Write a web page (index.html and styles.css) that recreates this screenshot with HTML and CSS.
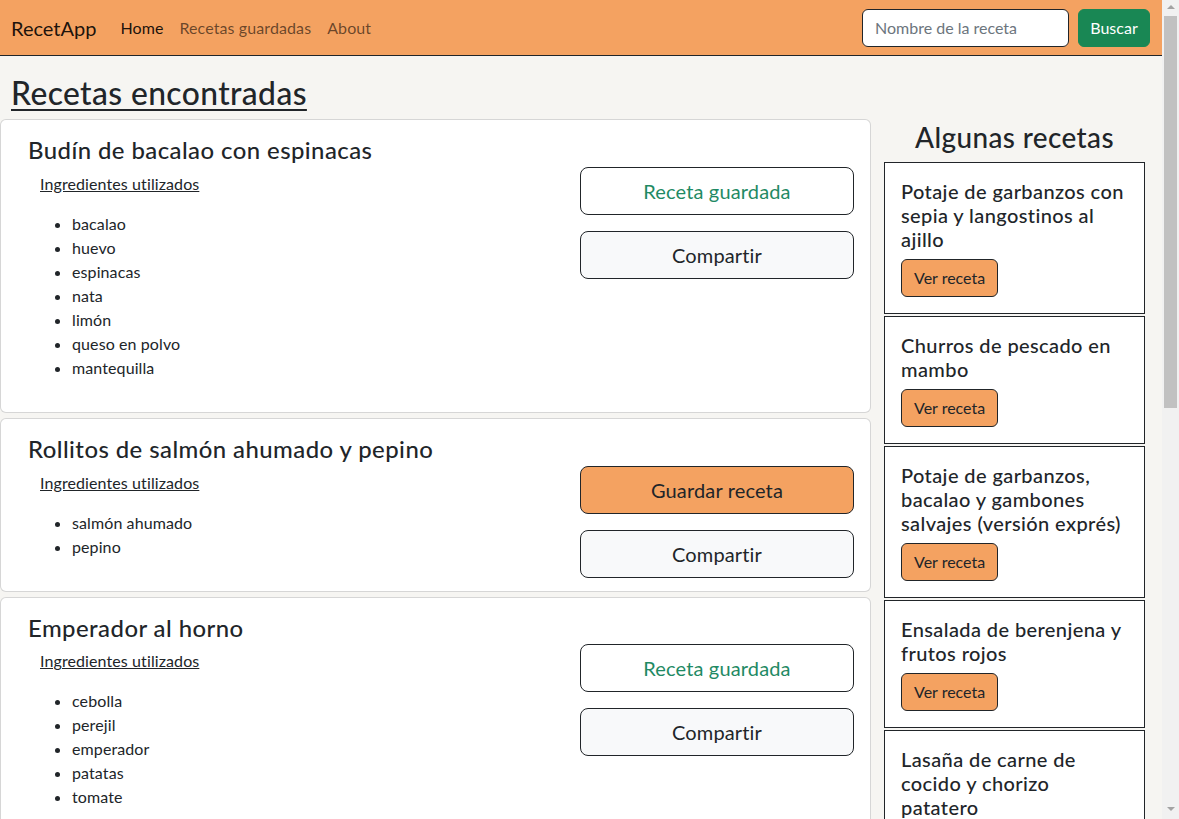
FILE: index.html
```html
<!DOCTYPE html>
<html lang="es">
<head>
<meta charset="utf-8">
<title>RecetApp</title>
<link rel="stylesheet" href="styles.css">
</head>
<body>
<div class="app">
  <div class="page">
    <nav class="navbar">
      <a class="brand" href="#">RecetApp</a>
      <ul class="nav">
        <li><a class="nav-link active" href="#">Home</a></li>
        <li><a class="nav-link" href="#">Recetas guardadas</a></li>
        <li><a class="nav-link" href="#">About</a></li>
      </ul>
      <form class="search">
        <input class="search-input" type="text" placeholder="Nombre de la receta">
        <button class="btn-buscar" type="button">Buscar</button>
      </form>
    </nav>
    <main class="content">
      <h2 class="page-title">Recetas encontradas</h2>
      <div class="layout">
        <section class="results">
          <article class="recipe-card">
            <h4 class="recipe-title">Budín de bacalao con espinacas</h4>
            <div class="recipe-row">
              <div class="ingredients">
                <a class="ing-link" href="#">Ingredientes utilizados</a>
                <ul class="ing-list">
                  <li>bacalao</li>
                  <li>huevo</li>
                  <li>espinacas</li>
                  <li>nata</li>
                  <li>limón</li>
                  <li>queso en polvo</li>
                  <li>mantequilla</li>
                </ul>
              </div>
              <div class="actions">
                <button class="btn-lg btn-saved" type="button">Receta guardada</button>
                <button class="btn-lg btn-share" type="button">Compartir</button>
              </div>
            </div>
          </article>
          <article class="recipe-card">
            <h4 class="recipe-title">Rollitos de salmón ahumado y pepino</h4>
            <div class="recipe-row">
              <div class="ingredients">
                <a class="ing-link" href="#">Ingredientes utilizados</a>
                <ul class="ing-list">
                  <li>salmón ahumado</li>
                  <li>pepino</li>
                </ul>
              </div>
              <div class="actions">
                <button class="btn-lg btn-save" type="button">Guardar receta</button>
                <button class="btn-lg btn-share" type="button">Compartir</button>
              </div>
            </div>
          </article>
          <article class="recipe-card">
            <h4 class="recipe-title">Emperador al horno</h4>
            <div class="recipe-row">
              <div class="ingredients">
                <a class="ing-link" href="#">Ingredientes utilizados</a>
                <ul class="ing-list">
                  <li>cebolla</li>
                  <li>perejil</li>
                  <li>emperador</li>
                  <li>patatas</li>
                  <li>tomate</li>
                </ul>
              </div>
              <div class="actions">
                <button class="btn-lg btn-saved" type="button">Receta guardada</button>
                <button class="btn-lg btn-share" type="button">Compartir</button>
              </div>
            </div>
          </article>
        </section>
        <aside class="sidebar">
          <h3 class="sidebar-title">Algunas recetas</h3>
          <div class="side-list">
            <div class="side-card">
              <h5 class="side-card-title">Potaje de garbanzos con sepia y langostinos al ajillo</h5>
              <button class="btn-ver" type="button">Ver receta</button>
            </div>
            <div class="side-card">
              <h5 class="side-card-title">Churros de pescado en mambo</h5>
              <button class="btn-ver" type="button">Ver receta</button>
            </div>
            <div class="side-card">
              <h5 class="side-card-title">Potaje de garbanzos, bacalao y gambones salvajes (versión exprés)</h5>
              <button class="btn-ver" type="button">Ver receta</button>
            </div>
            <div class="side-card">
              <h5 class="side-card-title">Ensalada de berenjena y frutos rojos</h5>
              <button class="btn-ver" type="button">Ver receta</button>
            </div>
            <div class="side-card">
              <h5 class="side-card-title">Lasaña de carne de cocido y chorizo patatero</h5>
              <button class="btn-ver" type="button">Ver receta</button>
            </div>
          </div>
        </aside>
      </div>
    </main>
  </div>
  <div class="scrollbar">
    <span class="arrow-up"></span>
    <div class="thumb"></div>
    <span class="arrow-down"></span>
  </div>
</div>
</body>
</html>
```
FILE: styles.css
```css
html, body {
  margin: 0;
  height: 100%;
}
body {
  font-family: Lato, "Liberation Sans", sans-serif;
  font-size: 16px;
  line-height: 1.5;
  color: #212529;
  background: #f6f5f2;
  overflow: hidden;
}
.app {
  display: flex;
  height: 100vh;
}
.page {
  flex: 1;
  min-width: 0;
  overflow: hidden;
}

/* navbar */
.navbar {
  display: flex;
  align-items: center;
  height: 56px;
  box-sizing: border-box;
  padding: 0 12px 0 11px;
  background: #f4a261;
  border-bottom: 1px solid #212529;
}
.brand {
  font-size: 20px;
  color: rgba(0, 0, 0, 0.9);
  text-decoration: none;
  margin-right: 16px;
}
.nav {
  display: flex;
  list-style: none;
  margin: 0;
  padding: 0;
}
.nav-link {
  display: block;
  padding: 8px;
  color: rgba(0, 0, 0, 0.58);
  text-decoration: none;
  letter-spacing: 0.1px;
}
.nav-link.active {
  color: rgba(0, 0, 0, 0.9);
}
.search {
  margin: 0 0 0 auto;
  display: flex;
  gap: 9px;
}
.search-input {
  width: 207px;
  height: 38px;
  box-sizing: border-box;
  border: 1px solid #212529;
  border-radius: 6px;
  padding: 6px 12px;
  font: inherit;
  color: #212529;
  background: #fff;
}
.search-input::placeholder {
  color: #6c757d;
}
.btn-buscar {
  width: 72px;
  height: 38px;
  box-sizing: border-box;
  border: 1px solid #198754;
  border-radius: 6px;
  background: #198754;
  color: #fff;
  font: inherit;
}

/* content */
.page-title {
  margin: 18px 0 7px 11px;
  font-size: 31.8px;
  font-weight: 500;
  line-height: 1.2;
  letter-spacing: 0.4px;
  text-decoration: underline;
  text-decoration-thickness: 2px;
  text-underline-offset: 4px;
}
.layout {
  display: flex;
  align-items: flex-start;
}
.results {
  width: 871px;
  display: flex;
  flex-direction: column;
  gap: 5px;
}
.recipe-card {
  background: #fff;
  border: 1px solid rgba(0, 0, 0, 0.16);
  border-radius: 6px;
  padding: 16px 16px 13px 27px;
}
.recipe-title {
  margin: 0;
  font-size: 23.9px;
  font-weight: 500;
  line-height: 1.2;
  letter-spacing: 0.45px;
}
.recipe-row {
  display: flex;
  align-items: flex-start;
  margin-top: 2px;
}
.ingredients {
  flex: 1;
  padding: 5px 0 0 12px;
  letter-spacing: 0.1px;
}
.ing-link {
  color: #212529;
  text-decoration: underline;
}
.ing-list {
  margin: 16px 0 19px;
  padding-left: 32px;
}
.actions {
  width: 274px;
  display: flex;
  flex-direction: column;
  gap: 16px;
}
.btn-lg {
  height: 48px;
  box-sizing: border-box;
  border: 1px solid #212529;
  border-radius: 8px;
  padding: 8px 16px;
  font: inherit;
  font-size: 20px;
  line-height: 30px;
  letter-spacing: 0.15px;
  color: #212529;
}
.btn-saved {
  background: #fff;
  color: #1f8a64;
}
.btn-save {
  background: #f4a261;
}
.btn-share {
  background: #f8f9fa;
}

/* sidebar */
.sidebar {
  flex: 1;
  padding-left: 13px;
}
.sidebar-title {
  width: 261px;
  margin: 2px 0 7.5px;
  text-align: center;
  font-size: 27.9px;
  font-weight: 500;
  line-height: 1.2;
  letter-spacing: 0.4px;
}
.side-list {
  width: 261px;
  display: flex;
  flex-direction: column;
  gap: 2px;
}
.side-card {
  background: #fff;
  border: 1px solid #212529;
  padding: 16px 16px 16px;
}
.side-card-title {
  margin: 0 0 8px;
  font-size: 20px;
  font-weight: 500;
  line-height: 24px;
  letter-spacing: 0.4px;
}
.btn-ver {
  height: 38px;
  box-sizing: border-box;
  padding: 6px 12px;
  border: 1px solid #212529;
  border-radius: 6px;
  background: #f4a261;
  color: #212529;
  font: inherit;
}

/* fake scrollbar */
.scrollbar {
  width: 17px;
  flex: none;
  background: #f1f1f1;
  display: flex;
  flex-direction: column;
  align-items: center;
}
.arrow-up {
  margin-top: 5px;
  width: 0;
  height: 0;
  border-left: 4px solid transparent;
  border-right: 4px solid transparent;
  border-bottom: 4px solid #a3a3a3;
}
.thumb {
  margin-top: 7px;
  width: 13px;
  height: 392px;
  background: #c1c1c1;
}
.arrow-down {
  margin-top: auto;
  margin-bottom: 8px;
  width: 0;
  height: 0;
  border-left: 4px solid transparent;
  border-right: 4px solid transparent;
  border-top: 4px solid #a3a3a3;
}
```
